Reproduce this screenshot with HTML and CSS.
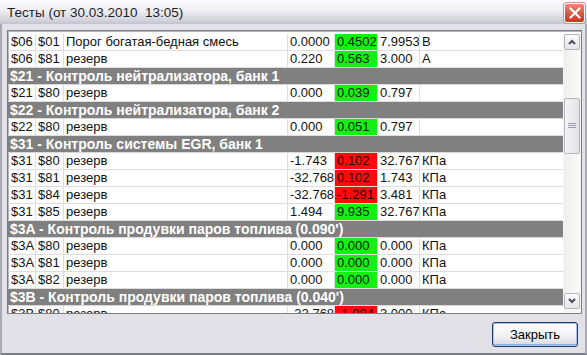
FILE: index.html
```html
<html>
<head>
    <link rel="stylesheet" href="styles.css">
</head>
<body>
    <div class="window">
        <div class="titlebar">
            <span class="title">Тесты (от 30.03.2010&nbsp; 13:05)</span>
            <div class="close-btn">
                <svg width="12" height="12" viewBox="0 0 12 12">
                    <path d="M1.5 1.5 L10.5 10.5 M10.5 1.5 L1.5 10.5" stroke="#fff" stroke-width="2.2" stroke-linecap="round"/>
                </svg>
            </div>
        </div>
        <div class="body">
            <div class="listbox">
                <div class="rows">
                    <div class="row"><div class="cell">$06</div><div class="cell">$01</div><div class="cell">Порог богатая-бедная смесь</div><div class="cell">0.0000</div><div class="cell ok">0.4502</div><div class="cell">7.9953</div><div class="cell">В</div></div>
                    <div class="row"><div class="cell">$06</div><div class="cell">$81</div><div class="cell">резерв</div><div class="cell">0.220</div><div class="cell ok">0.563</div><div class="cell">3.000</div><div class="cell">А</div></div>
                    <div class="row group">$21 - Контроль нейтрализатора, банк 1</div>
                    <div class="row"><div class="cell">$21</div><div class="cell">$80</div><div class="cell">резерв</div><div class="cell">0.000</div><div class="cell ok">0.039</div><div class="cell">0.797</div><div class="cell"></div></div>
                    <div class="row group">$22 - Контроль нейтрализатора, банк 2</div>
                    <div class="row"><div class="cell">$22</div><div class="cell">$80</div><div class="cell">резерв</div><div class="cell">0.000</div><div class="cell ok">0.051</div><div class="cell">0.797</div><div class="cell"></div></div>
                    <div class="row group">$31 - Контроль системы EGR, банк 1</div>
                    <div class="row"><div class="cell">$31</div><div class="cell">$80</div><div class="cell">резерв</div><div class="cell">-1.743</div><div class="cell bad">0.102</div><div class="cell">32.767</div><div class="cell">КПа</div></div>
                    <div class="row"><div class="cell">$31</div><div class="cell">$81</div><div class="cell">резерв</div><div class="cell">-32.768</div><div class="cell bad">0.102</div><div class="cell">1.743</div><div class="cell">КПа</div></div>
                    <div class="row"><div class="cell">$31</div><div class="cell">$84</div><div class="cell">резерв</div><div class="cell">-32.768</div><div class="cell bad">-1.291</div><div class="cell">3.481</div><div class="cell">КПа</div></div>
                    <div class="row"><div class="cell">$31</div><div class="cell">$85</div><div class="cell">резерв</div><div class="cell">1.494</div><div class="cell ok">9.935</div><div class="cell">32.767</div><div class="cell">КПа</div></div>
                    <div class="row group">$3A - Контроль продувки паров топлива (0.090')</div>
                    <div class="row"><div class="cell">$3A</div><div class="cell">$80</div><div class="cell">резерв</div><div class="cell">0.000</div><div class="cell ok">0.000</div><div class="cell">0.000</div><div class="cell">КПа</div></div>
                    <div class="row"><div class="cell">$3A</div><div class="cell">$81</div><div class="cell">резерв</div><div class="cell">0.000</div><div class="cell ok">0.000</div><div class="cell">0.000</div><div class="cell">КПа</div></div>
                    <div class="row"><div class="cell">$3A</div><div class="cell">$82</div><div class="cell">резерв</div><div class="cell">0.000</div><div class="cell ok">0.000</div><div class="cell">0.000</div><div class="cell">КПа</div></div>
                    <div class="row group">$3B - Контроль продувки паров топлива (0.040')</div>
                    <div class="row"><div class="cell">$3B</div><div class="cell">$80</div><div class="cell">резерв</div><div class="cell">-32.768</div><div class="cell bad">-1.084</div><div class="cell">3.000</div><div class="cell">КПа</div></div>
                </div>
                <div class="scrollbar">
                    <div class="sb-btn">
                        <svg width="8" height="6" viewBox="0 0 8 6"><path d="M1 5 L4 2 L7 5" stroke="#4a4a5a" stroke-width="2" fill="none"/></svg>
                    </div>
                    <div class="sb-track">
                        <div class="sb-thumb">
                            <svg width="8" height="6" viewBox="0 0 8 6"><path d="M0 0.5 H8 M0 2.5 H8 M0 4.5 H8" stroke="#9a9aa8" stroke-width="1"/></svg>
                        </div>
                    </div>
                    <div class="sb-btn">
                        <svg width="8" height="6" viewBox="0 0 8 6"><path d="M1 1 L4 4 L7 1" stroke="#4a4a5a" stroke-width="2" fill="none"/></svg>
                    </div>
                </div>
            </div>
            <div class="footer">
                <button class="btn">Закрыть</button>
            </div>
        </div>
    </div>
</body>
</html>
```
FILE: styles.css
```css
body {
    margin: 0;
    padding: 0;
    font-family: "Liberation Sans", Arial, sans-serif;
    background-color: #e2e1e7;
}
.window {
    width: 587px;
    height: 355px;
    display: flex;
    flex-direction: column;
    overflow: hidden;
}
.titlebar {
    height: 24px;
    flex-shrink: 0;
    display: flex;
    align-items: center;
    justify-content: space-between;
    padding: 0 2px 0 7px;
    background: linear-gradient(#fdfdfe, #eeeef3 45%, #d2d2dc 85%, #c4c4d0);
    box-sizing: border-box;
}
.title {
    font-size: 13.5px;
    color: #1e1e28;
}
.close-btn {
    width: 21px;
    height: 20px;
    margin-top: 2px;
    border-radius: 3px;
    border: 1px solid #f4f4f4;
    box-sizing: border-box;
    background: linear-gradient(#e88a78, #d75a44 50%, #c23a24);
    display: flex;
    align-items: center;
    justify-content: center;
    box-shadow: 0 0 0 1px #b89a98;
}
.body {
    flex: 1;
    display: flex;
    flex-direction: column;
    padding: 6px 3px 0 5px;
    border-left: 2px solid #a9a9b4;
    border-right: 2px solid #a9a9b4;
    border-bottom: 2px solid #7d7d88;
    background-color: #e2e1e7;
}
.listbox {
    height: 284px;
    display: flex;
    border: 1px solid #7c7c84;
    box-shadow: inset 1px 1px 0 #b4b4bc;
    background-color: #fff;
    padding-top: 3px;
    box-sizing: border-box;
}
.rows {
    flex: 1;
    overflow: hidden;
    font-size: 13px;
    color: #111;
}
.row {
    display: grid;
    grid-template-columns: 28px 28px 224px 47px 43px 42px 1fr;
    height: 17px;
    box-sizing: border-box;
    border-bottom: 1px solid #dedede;
    line-height: 16px;
}
.cell {
    border-right: 1px solid #dedede;
    padding-left: 2px;
    white-space: nowrap;
    overflow: hidden;
}
.cell:first-child {
    padding-left: 3px;
}
.cell:last-child {
    border-right: none;
}
.cell.ok {
    background-color: #14f014;
    color: #0a200a;
}
.cell.bad {
    background-color: #fa0c0c;
    color: #2a0000;
}
.row.group {
    display: block;
    background-color: #808080;
    color: #fff;
    font-size: 14px;
    font-weight: bold;
    padding-left: 2px;
    border-bottom: 1px solid #d8d8d8;
}
.scrollbar {
    width: 18px;
    display: flex;
    flex-direction: column;
    padding: 0 1px 4px 1px;
    box-sizing: border-box;
    background-color: #f5f5f3;
}
.sb-btn {
    height: 16px;
    border: 1px solid #b4b4c0;
    border-radius: 2px;
    box-sizing: border-box;
    background: linear-gradient(#fcfcfd, #e4e4ea);
    display: flex;
    align-items: center;
    justify-content: center;
}
.sb-track {
    flex: 1;
    background: linear-gradient(90deg, #eeeeea, #fbfbf9);
}
.sb-thumb {
    height: 56px;
    margin-top: 48px;
    border: 1px solid #b4b4c0;
    border-radius: 2px;
    box-sizing: border-box;
    background: linear-gradient(90deg, #f4f4f6, #e2e2e8);
    display: flex;
    align-items: center;
    justify-content: center;
}
.footer {
    display: flex;
    justify-content: flex-end;
    padding: 8px 4px 0 0;
}
.btn {
    width: 86px;
    height: 25px;
    font-family: "Liberation Sans", Arial, sans-serif;
    font-size: 13px;
    color: #000;
    border: 1px solid #1c3a6a;
    border-radius: 3px;
    background: linear-gradient(#ffffff, #f0f0f4 60%, #d6d6de);
    box-shadow: inset 0 0 0 1px #a8c4ec, inset 0 -1px 0 1px #8cacdc;
    padding: 0;
}
```
